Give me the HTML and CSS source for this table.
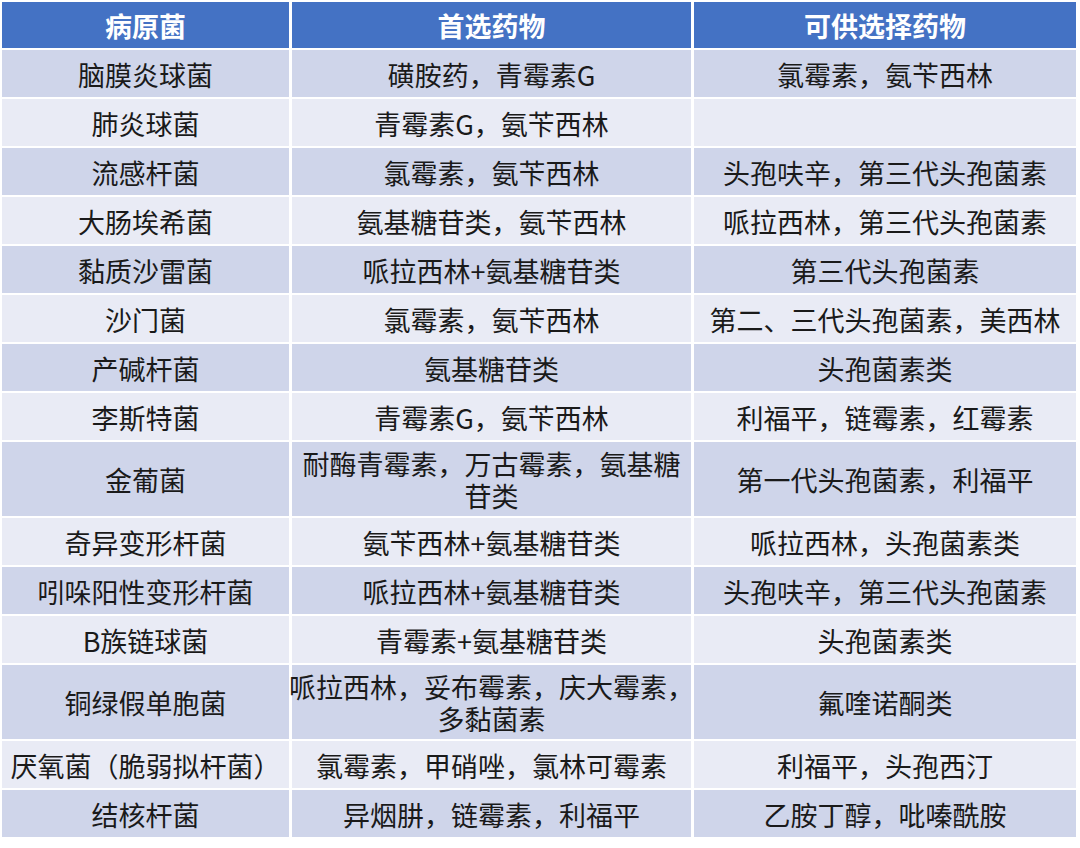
FILE: index.html
```html
<!DOCTYPE html>
<html lang="zh-CN">
<head>
<meta charset="utf-8">
<title>病原菌与药物</title>
<link rel="stylesheet" href="styles.css">
</head>
<body>
<div class="table">
  <div class="row head">
    <div class="cell"><span class="txt">病原菌</span></div>
    <div class="cell"><span class="txt">首选药物</span></div>
    <div class="cell"><span class="txt">可供选择药物</span></div>
  </div>
  <div class="row odd">
    <div class="cell"><span class="txt">脑膜炎球菌</span></div>
    <div class="cell"><span class="txt">磺胺药，青霉素G</span></div>
    <div class="cell"><span class="txt">氯霉素，氨苄西林</span></div>
  </div>
  <div class="row even">
    <div class="cell"><span class="txt">肺炎球菌</span></div>
    <div class="cell"><span class="txt">青霉素G，氨苄西林</span></div>
    <div class="cell"><span class="txt"></span></div>
  </div>
  <div class="row odd">
    <div class="cell"><span class="txt">流感杆菌</span></div>
    <div class="cell"><span class="txt">氯霉素，氨苄西林</span></div>
    <div class="cell"><span class="txt">头孢呋辛，第三代头孢菌素</span></div>
  </div>
  <div class="row even">
    <div class="cell"><span class="txt">大肠埃希菌</span></div>
    <div class="cell"><span class="txt">氨基糖苷类，氨苄西林</span></div>
    <div class="cell"><span class="txt">哌拉西林，第三代头孢菌素</span></div>
  </div>
  <div class="row odd">
    <div class="cell"><span class="txt">黏质沙雷菌</span></div>
    <div class="cell"><span class="txt">哌拉西林+氨基糖苷类</span></div>
    <div class="cell"><span class="txt">第三代头孢菌素</span></div>
  </div>
  <div class="row even">
    <div class="cell"><span class="txt">沙门菌</span></div>
    <div class="cell"><span class="txt">氯霉素，氨苄西林</span></div>
    <div class="cell"><span class="txt">第二、三代头孢菌素，美西林</span></div>
  </div>
  <div class="row odd">
    <div class="cell"><span class="txt">产碱杆菌</span></div>
    <div class="cell"><span class="txt">氨基糖苷类</span></div>
    <div class="cell"><span class="txt">头孢菌素类</span></div>
  </div>
  <div class="row even">
    <div class="cell"><span class="txt">李斯特菌</span></div>
    <div class="cell"><span class="txt">青霉素G，氨苄西林</span></div>
    <div class="cell"><span class="txt">利福平，链霉素，红霉素</span></div>
  </div>
  <div class="row odd tall">
    <div class="cell"><span class="txt">金葡菌</span></div>
    <div class="cell"><span class="txt">耐酶青霉素，万古霉素，氨基糖<br>苷类</span></div>
    <div class="cell"><span class="txt">第一代头孢菌素，利福平</span></div>
  </div>
  <div class="row even">
    <div class="cell"><span class="txt">奇异变形杆菌</span></div>
    <div class="cell"><span class="txt">氨苄西林+氨基糖苷类</span></div>
    <div class="cell"><span class="txt">哌拉西林，头孢菌素类</span></div>
  </div>
  <div class="row odd">
    <div class="cell"><span class="txt">吲哚阳性变形杆菌</span></div>
    <div class="cell"><span class="txt">哌拉西林+氨基糖苷类</span></div>
    <div class="cell"><span class="txt">头孢呋辛，第三代头孢菌素</span></div>
  </div>
  <div class="row even">
    <div class="cell"><span class="txt">B族链球菌</span></div>
    <div class="cell"><span class="txt">青霉素+氨基糖苷类</span></div>
    <div class="cell"><span class="txt">头孢菌素类</span></div>
  </div>
  <div class="row odd tall">
    <div class="cell"><span class="txt">铜绿假单胞菌</span></div>
    <div class="cell"><span class="txt">哌拉西林，妥布霉素，庆大霉素，<br>多黏菌素</span></div>
    <div class="cell"><span class="txt">氟喹诺酮类</span></div>
  </div>
  <div class="row even">
    <div class="cell"><span class="txt">厌氧菌（脆弱拟杆菌）</span></div>
    <div class="cell"><span class="txt">氯霉素，甲硝唑，氯林可霉素</span></div>
    <div class="cell"><span class="txt">利福平，头孢西汀</span></div>
  </div>
  <div class="row odd">
    <div class="cell"><span class="txt">结核杆菌</span></div>
    <div class="cell"><span class="txt">异烟肼，链霉素，利福平</span></div>
    <div class="cell"><span class="txt">乙胺丁醇，吡嗪酰胺</span></div>
  </div>
</div>
</body>
</html>
```

FILE: styles.css
```css
html, body {
  margin: 0;
  padding: 0;
  background: #ffffff;
}

body {
  padding: 2px 0 0 2px;
  font-family: "Noto Sans CJK SC", "Noto Sans", sans-serif;
  color: #1a1a1a;
}

.table {
  display: flex;
  flex-direction: column;
  gap: 2px;
  width: 1074px;
}

.row {
  display: grid;
  grid-template-columns: 287px 399px 382px;
  column-gap: 3px;
  height: 47px;
}

.row.head {
  height: 46px;
}

.row.tall {
  height: 74px;
}

.cell {
  display: flex;
  align-items: center;
  justify-content: center;
  overflow: visible;
}

.txt {
  font-size: 27px;
  line-height: 31px;
  white-space: nowrap;
  text-align: center;
  padding-top: 2px;
}

.tall .txt {
  line-height: 32px;
}

.head .cell {
  background: #4472c4;
}

.head .txt {
  color: #ffffff;
  font-weight: 700;
  padding-top: 0;
}

.odd .cell {
  background: #cfd5ea;
}

.even .cell {
  background: #e9ebf5;
}
```
